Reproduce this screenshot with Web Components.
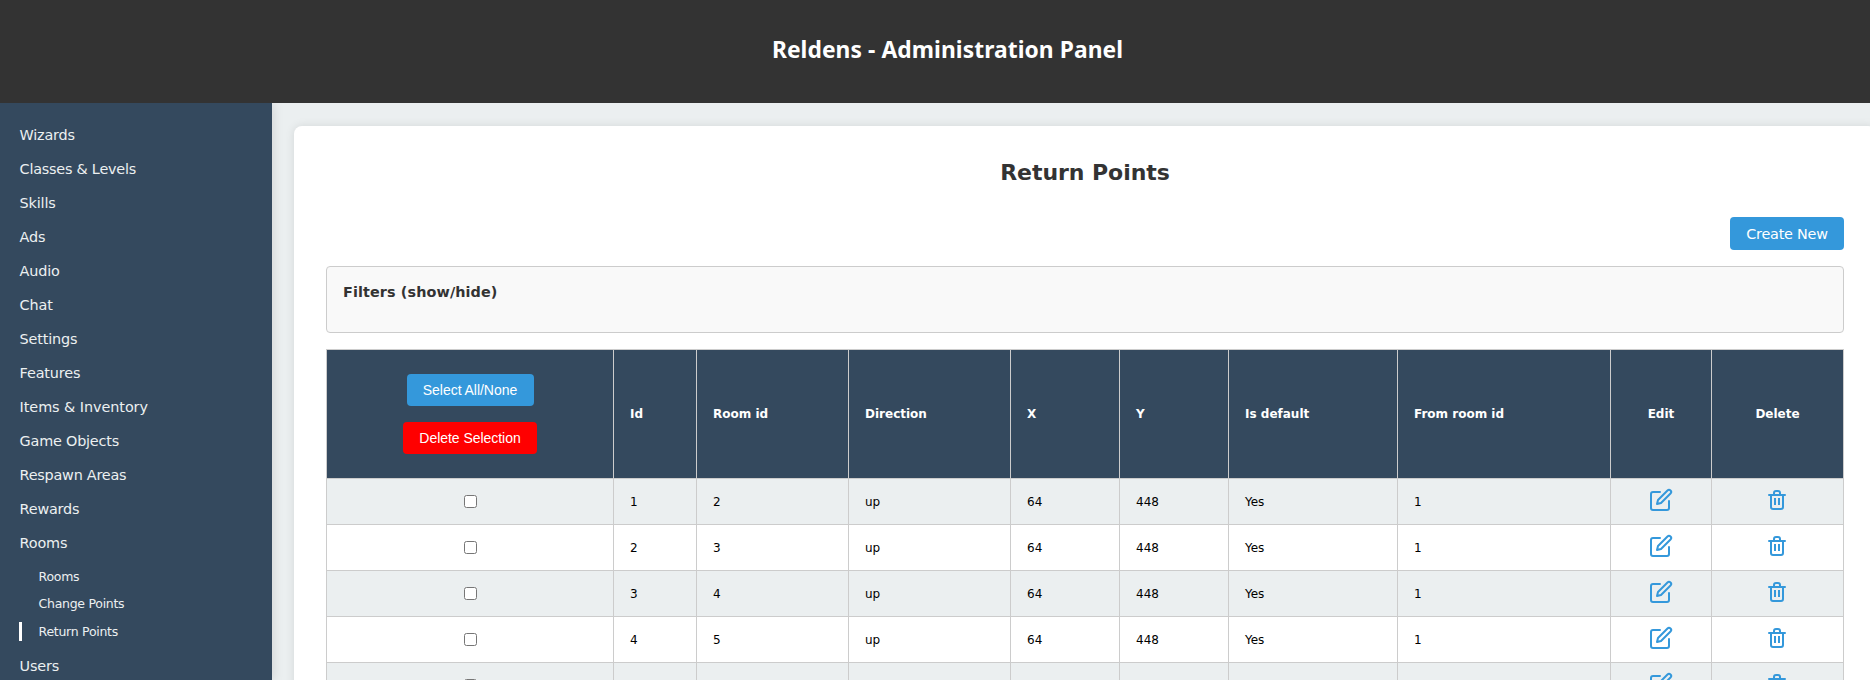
<!DOCTYPE html>
<html lang="en">
<head>
<meta charset="utf-8">
<title>Reldens - Administration Panel</title>
<style>html,body{margin:0;height:100%;overflow:hidden;background:#ebeff0}</style>
</head>
<body>
<admin-app></admin-app>
<script>
const define = (name, html, setup) => {
  const tpl = document.createElement('template');
  tpl.innerHTML = html;
  customElements.define(name, class extends HTMLElement {
    connectedCallback() {
      if (this.shadowRoot) return;
      const root = this.attachShadow({ mode: 'open' });
      root.append(tpl.content.cloneNode(true));
      if (setup) setup(this, root);
    }
  });
};

define('admin-header', `
<style>
:host{display:flex;align-items:center;justify-content:center;box-sizing:border-box;height:103px;padding:0 0 3px 25px;background:#333;color:#fff;position:relative;z-index:2}
h1{margin:0;font:bold 22.8px/32px "Noto Sans",sans-serif;letter-spacing:.07px;white-space:nowrap}
</style><h1><slot></slot></h1>`);

define('nav-item', `
<style>
:host{display:block;height:34px;line-height:34px;padding-left:19.6px;font-size:14.4px;white-space:nowrap;color:#ecf0f1}
:host([sub]){height:27.4px;line-height:27.4px;padding-left:19px;font-size:12.5px;letter-spacing:-.28px}
a{display:block}
:host([sub]) a{padding-left:19.6px}
:host([active]){display:flex;align-items:center}
:host([active]) a{border-left:3px solid #fff;padding-left:16.6px;height:19px;line-height:19px}
</style><a><slot></slot></a>`, (el) => {
  const t = el.getAttribute('track');
  if (t) el.style.letterSpacing = t + 'px';
});

define('side-nav', `
<style>
:host{display:block;flex:none;box-sizing:border-box;width:272px;height:577px;padding-top:15px;background:#34495e;box-shadow:2px 0 10px rgba(0,0,0,.1)}
.sub{padding:3px 0 4px;height:82px}
</style>
<nav>
<nav-item track="-.2">Wizards</nav-item>
<nav-item track="-.23">Classes &amp; Levels</nav-item>
<nav-item track="-.15">Skills</nav-item>
<nav-item track="-.15">Ads</nav-item>
<nav-item track="-.15">Audio</nav-item>
<nav-item track="-.15">Chat</nav-item>
<nav-item track="-.15">Settings</nav-item>
<nav-item track="-.15">Features</nav-item>
<nav-item track="-.06">Items &amp; Inventory</nav-item>
<nav-item track="-.2">Game Objects</nav-item>
<nav-item track="-.23">Respawn Areas</nav-item>
<nav-item track="-.2">Rewards</nav-item>
<nav-item track="-.15">Rooms</nav-item>
<div class="sub">
<nav-item sub>Rooms</nav-item>
<nav-item sub>Change Points</nav-item>
<nav-item sub active>Return Points</nav-item>
</div>
<nav-item track="-.15">Users</nav-item>
</nav>`);

define('ui-button', `
<style>
:host{display:inline-flex;align-items:center;justify-content:center;box-sizing:border-box;height:32px;width:127px;border-radius:4px;background:#3498db;color:#fff;font:14px "Liberation Sans",Arial,sans-serif;letter-spacing:-.04px;white-space:nowrap}
:host([kind=danger]){background:#f00;width:134px}
:host([kind=link]){width:114px;height:33px;font:14.4px "DejaVu Sans",Verdana,sans-serif;letter-spacing:-.22px}
</style><slot></slot>`);

define('filter-box', `
<style>
:host{display:block;box-sizing:border-box;height:67px;margin:16px 0;padding:15px 16px;border:1px solid #ccc;border-radius:4px;background:#f9f9f9}
h3{margin:0;font-size:14.4px;line-height:20px;letter-spacing:.1px;color:#333}
</style><h3><slot></slot></h3>`);

define('ui-icon', `
<style>
:host{display:block;width:24px;height:24px;margin-bottom:3px}
:host([name=trash]){margin-right:1px}
svg{display:block;fill:none;stroke:#3498db;stroke-width:2;stroke-linejoin:round;stroke-linecap:round}
:host([name=edit]) .trash,:host([name=trash]) .edit{display:none}
</style>
<svg width="24" height="24" viewBox="0 0 24 24">
<g class="edit"><path d="M11 4H4a2 2 0 0 0-2 2v14a2 2 0 0 0 2 2h14a2 2 0 0 0 2-2v-7"/><path d="M18.5 2.5a2.121 2.121 0 0 1 3 3L12 15l-4 1 1-4 9.5-9.5z"/></g>
<g class="trash"><path d="M4 7h16M6 7v12a2 2 0 0 0 2 2h8a2 2 0 0 0 2-2V7M9 7V5a2 2 0 0 1 2-2h2a2 2 0 0 1 2 2v2"/><path stroke-linecap="butt" d="M10 10v7M14 10v7"/></g>
</svg>`);

define('grid-row', `
<style>
:host{display:grid;grid-template-columns:287px 83px 152px 162px 109px 109px 169px 213px 101px 132px;height:46px;background:#fff;font-size:12px;color:#000}
:host(:nth-child(even)){background:#ebeff0}
:host([head]){height:129px;background:#34495e;color:#fff;font-weight:bold}
::slotted(*){display:flex;box-sizing:border-box;align-items:center;padding-left:16px;border-right:1px solid #ccc;border-bottom:1px solid #ccc;min-width:0}
::slotted(.mid){padding-left:0;justify-content:center}
::slotted(.stack){flex-direction:column;gap:16px}
</style><slot></slot>`);

define('data-table', `
<style>
:host{display:block;border-top:1px solid #ccc;border-left:1px solid #ccc}
input{width:13px;height:13px;margin:0 0 0 1px}
</style>`, (el, root) => {
  const row = (cells, head) => {
    const r = document.createElement('grid-row');
    if (head) r.setAttribute('head', '');
    cells.forEach((html, i) => {
      const c = document.createElement('div');
      if (i === 0 || i > 7) c.className = head && i === 0 ? 'mid stack' : 'mid';
      c.innerHTML = html;
      r.append(c);
    });
    return r;
  };
  const box = document.createElement('div');
  const check = '<input type="checkbox">';
  const actions = ['<ui-icon name="edit"></ui-icon>', '<ui-icon name="trash"></ui-icon>'];
  box.append(row(['<ui-button>Select All/None</ui-button><ui-button kind="danger">Delete Selection</ui-button>',
    'Id', 'Room id', 'Direction', 'X', 'Y', 'Is default', 'From room id', 'Edit', 'Delete'], true));
  for (let id = 1; id <= 4; id++) {
    box.append(row([check, id, id + 1, 'up', 64, 448, 'Yes', 1, ...actions]));
  }
  box.append(row([check, '', '', '', '', '', '', '', ...actions]));
  root.append(box);
});

define('content-card', `
<style>
:host{display:block;flex:none;box-sizing:border-box;width:1582px;margin:23px 0 0 22px;padding:33px 32px 32px;border-radius:8px;background:#fff;box-shadow:0 0 10px rgba(0,0,0,.1)}
h2{margin:0 0 30px;font-size:22px;line-height:28px;letter-spacing:-.05px;text-align:center;color:#333}
.actions{display:flex;justify-content:flex-end}
</style>
<h2>Return Points</h2>
<div class="actions"><ui-button kind="link">Create New</ui-button></div>
<filter-box>Filters (show/hide)</filter-box>
<data-table></data-table>`);

define('admin-app', `
<style>
:host{display:flex;flex-direction:column;height:100vh;overflow:hidden;background:#ebeff0;font-family:"DejaVu Sans",Verdana,sans-serif}
.body{display:flex;align-items:flex-start;height:577px;overflow:hidden}
</style>
<admin-header>Reldens - Administration Panel</admin-header>
<div class="body"><side-nav></side-nav><content-card></content-card></div>`);
</script>
</body>
</html>
